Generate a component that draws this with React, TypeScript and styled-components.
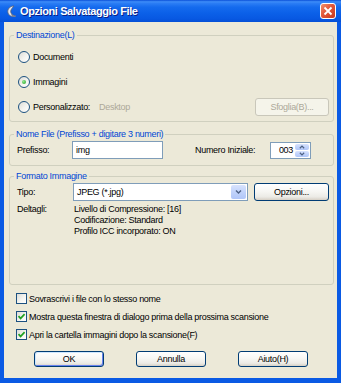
import styled, { createGlobalStyle } from "styled-components";

const GlobalStyle = createGlobalStyle`
  html, body {
    margin: 0;
    padding: 0;
    background: #ffffff;
  }
`;

const Window = styled.div`
  width: 341px;
  height: 383px;
  display: flex;
  flex-direction: column;
  overflow: hidden;
  font-family: "Liberation Sans", Arial, sans-serif;
  font-size: 9px;
  letter-spacing: -0.3px;
  color: #000;
`;

const TitleBar = styled.div`
  height: 22px;
  flex: none;
  display: flex;
  align-items: center;
  gap: 3px;
  padding: 0 5px 0 6px;
  background: linear-gradient(
    to bottom,
    #0a4fd8 0%,
    #3d8cf8 8%,
    #2a7cf4 16%,
    #156bee 32%,
    #0b60e8 60%,
    #0858e2 85%,
    #0550d6 100%
  );
`;

const Title = styled.span`
  color: #fff;
  font-weight: bold;
  font-size: 11px;
  letter-spacing: -0.4px;
  text-shadow: 1px 1px 0 #0a1e86;
`;

const CloseButton = styled.span`
  margin-left: auto;
  width: 16px;
  height: 16px;
  box-sizing: border-box;
  border: 1px solid #fff;
  border-radius: 3px;
  background: linear-gradient(135deg, #f0906c 0%, #e2573a 45%, #c8391d 100%);
  display: flex;
  align-items: center;
  justify-content: center;
`;

const Frame = styled.div`
  flex: 1;
  display: flex;
  flex-direction: column;
  background: #ece9d8;
  border: solid #0a5ae4;
  border-width: 0 4px 5px 4px;
  padding: 8px 3px 0 5px;
`;

const Group = styled.fieldset<{ $pad: string; $top: number }>`
  margin: ${(p) => p.$top}px 0 0 0;
  min-width: 0;
  border: 1px solid #d0d0bf;
  border-radius: 3px;
  padding: ${(p) => p.$pad};
`;

const Legend = styled.legend`
  color: #0046d5;
  padding: 0 2px;
  margin-left: -3px;
  height: 11px;
  line-height: 11px;
`;

const Rows = styled.div<{ $gap: number }>`
  display: flex;
  flex-direction: column;
  gap: ${(p) => p.$gap}px;
`;

const Row = styled.div<{ $h?: number }>`
  display: flex;
  align-items: center;
  height: ${(p) => p.$h ?? 18}px;
`;

const RadioCircle = styled.span<{ $checked?: boolean }>`
  width: 12px;
  height: 12px;
  box-sizing: border-box;
  margin: 0 3px 0 1px;
  border: 1px solid #1c5180;
  border-radius: 50%;
  background: linear-gradient(135deg, #dcdcd7 0%, #f4f4f0 55%, #ffffff 100%);
  display: flex;
  align-items: center;
  justify-content: center;

  &::after {
    content: "";
    width: 4px;
    height: 4px;
    border-radius: 50%;
    background: ${(p) =>
      p.$checked ? "radial-gradient(circle at 35% 35%, #8fe88f, #21a121)" : "transparent"};
  }
`;

const Label = styled.span<{ $w?: number; $muted?: boolean }>`
  white-space: nowrap;
  flex: none;
  width: ${(p) => (p.$w ? `${p.$w}px` : "auto")};
  color: ${(p) => (p.$muted ? "#aca899" : "#000")};
`;

const PushButton = styled.button<{ $w: number; $h?: number; $default?: boolean }>`
  flex: none;
  width: ${(p) => p.$w}px;
  height: ${(p) => p.$h ?? 16}px;
  padding: 0;
  box-sizing: border-box;
  font: inherit;
  letter-spacing: inherit;
  color: #000;
  border: 1px solid #003c74;
  border-radius: 3px;
  background: linear-gradient(to bottom, #ffffff 0%, #f7f7f4 45%, #ecebe6 80%, #d6d0c5 100%);
  box-shadow: ${(p) =>
    p.$default ? "inset 1px 1px 0 #cee7ff, inset -1px -1px 0 #6982ee" : "none"};

  &:disabled {
    border-color: #c9c7ba;
    color: #aca899;
    background: #f5f4ea;
  }
`;

const TextField = styled.div<{ $w: number; $h?: number }>`
  flex: none;
  width: ${(p) => p.$w}px;
  height: ${(p) => p.$h ?? 17}px;
  box-sizing: border-box;
  border: 1px solid #7f9db9;
  background: #fff;
  display: flex;
  align-items: center;
  padding-left: 3px;
`;

const Spinner = styled.div`
  flex: none;
  width: 41px;
  height: 17px;
  box-sizing: border-box;
  border: 1px solid #7f9db9;
  background: #fff;
  display: flex;
`;

const SpinValue = styled.span`
  flex: 1;
  text-align: right;
  line-height: 15px;
  padding-right: 2px;
`;

const SpinStack = styled.div`
  width: 14px;
  display: flex;
  flex-direction: column;
  gap: 1px;
  padding: 1px 1px 1px 0;
`;

const ArrowButton = styled.span<{ $w?: number }>`
  flex: ${(p) => (p.$w ? `0 0 ${p.$w}px` : "1")};
  border-radius: 2px;
  background: linear-gradient(to bottom, #d8e3fd 0%, #c1d3fb 50%, #b0c6f8 100%);
  display: flex;
  align-items: center;
  justify-content: center;
`;

const Combo = styled.div`
  flex: none;
  width: 175px;
  height: 18px;
  box-sizing: border-box;
  border: 1px solid #7f9db9;
  background: #fff;
  display: flex;
  padding: 1px;
`;

const ComboText = styled.span`
  flex: 1;
  line-height: 14px;
  padding-left: 2px;
`;

const Details = styled.div`
  display: flex;
  margin-top: 3px;
  line-height: 11px;
`;

const DetailLines = styled.div`
  display: flex;
  flex-direction: column;
`;

const CheckList = styled.div`
  display: flex;
  flex-direction: column;
  gap: 5px;
  margin-top: 7px;
  padding-left: 7px;
`;

const CheckBox = styled.span`
  flex: none;
  width: 11px;
  height: 11px;
  box-sizing: border-box;
  margin-right: 2px;
  border: 1px solid #1c5180;
  background: linear-gradient(135deg, #dcdcd7 0%, #f4f4f0 55%, #ffffff 100%);
  display: flex;
  align-items: center;
  justify-content: center;
`;

const ButtonRow = styled.div`
  display: flex;
  gap: 32px;
  margin-top: 10px;
  padding-left: 25px;
`;

const AppIcon = () => (
  <svg width="11" height="13" viewBox="0 0 11 13">
    <path d="M8 1 C4 1 1 4 2 8 C3 11 6 12 9 11 C6 10 4 8 5 5 C6 3 7 2 8 1 Z" fill="#e6e8f0" stroke="#5a6070" strokeWidth="0.8" />
    <path d="M5 8 C6 10 8 11 10 10.5 L9.5 12 C7 12.5 5 11 5 8 Z" fill="#7b8396" />
  </svg>
);

const Tick = () => (
  <svg width="9" height="9" viewBox="0 0 9 9">
    <path d="M1.5 4.2 L3.6 6.4 L7.6 2.2" fill="none" stroke="#21a121" strokeWidth="1.7" />
  </svg>
);

const Chevron = ({ up = false, size = 7 }: { up?: boolean; size?: number }) => (
  <svg width={size} height={Math.round(size * 0.6)} viewBox="0 0 7 4">
    <path d={up ? "M1 3.5 L3.5 1 L6 3.5" : "M1 0.5 L3.5 3 L6 0.5"} fill="none" stroke="#4d6185" strokeWidth="1.4" />
  </svg>
);

const Check = ({ checked, children }: { checked?: boolean; children: string }) => (
  <Row $h={13}>
    <CheckBox>{checked && <Tick />}</CheckBox>
    <Label>{children}</Label>
  </Row>
);

const Radio = ({ checked, children }: { checked?: boolean; children: string }) => (
  <>
    <RadioCircle $checked={checked} />
    <Label>{children}</Label>
  </>
);

export default function App() {
  return (
    <>
      <GlobalStyle />
      <Window>
        <TitleBar>
          <AppIcon />
          <Title>Opzioni Salvataggio File</Title>
          <CloseButton>
            <svg width="10" height="10" viewBox="0 0 10 10">
              <path d="M1.5 1.5 L8.5 8.5 M8.5 1.5 L1.5 8.5" stroke="#fff" strokeWidth="1.8" />
            </svg>
          </CloseButton>
        </TitleBar>

        <Frame>
          <Group $top={0} $pad="7px 4px 5px 7px">
            <Legend>Destinazione(L)</Legend>
            <Rows $gap={7}>
              <Row>
                <Radio>Documenti</Radio>
              </Row>
              <Row>
                <Radio checked>Immagini</Radio>
              </Row>
              <Row>
                <Radio>Personalizzato:</Radio>
                <Label $muted style={{ marginLeft: 9 }}>Desktop</Label>
                <PushButton $w={74} $h={18} disabled style={{ marginLeft: "auto" }}>
                  Sfoglia(B)...
                </PushButton>
              </Row>
            </Rows>
          </Group>

          <Group $top={7} $pad="1px 4px 6px 7px">
            <Legend>Nome File (Prefisso + digitare 3 numeri)</Legend>
            <Row>
              <Label $w={55}>Prefisso:</Label>
              <TextField $w={91} $h={18}>img</TextField>
              <Label $w={75} style={{ marginLeft: 32 }}>Numero Iniziale:</Label>
              <Spinner>
                <SpinValue>003</SpinValue>
                <SpinStack>
                  <ArrowButton>
                    <Chevron up size={6} />
                  </ArrowButton>
                  <ArrowButton>
                    <Chevron size={6} />
                  </ArrowButton>
                </SpinStack>
              </Spinner>
            </Row>
          </Group>

          <Group $top={5} $pad="1px 4px 47px 7px">
            <Legend>Formato Immagine</Legend>
            <Row>
              <Label $w={56}>Tipo:</Label>
              <Combo>
                <ComboText>JPEG (*.jpg)</ComboText>
                <ArrowButton $w={15}>
                  <Chevron />
                </ArrowButton>
              </Combo>
              <PushButton $w={75} $h={18} style={{ marginLeft: 6 }}>
                Opzioni...
              </PushButton>
            </Row>
            <Details>
              <Label $w={57}>Deltagli:</Label>
              <DetailLines>
                <span>Livello di Compressione: [16]</span>
                <span>Codificazione: Standard</span>
                <span>Profilo ICC incorporato: ON</span>
              </DetailLines>
            </Details>
          </Group>

          <CheckList>
            <Check>Sovrascrivi i file con lo stesso nome</Check>
            <Check checked>Mostra questa finestra di dialogo prima della prossima scansione</Check>
            <Check checked>Apri la cartella immagini dopo la scansione(F)</Check>
          </CheckList>

          <ButtonRow>
            <PushButton $w={70} $default>OK</PushButton>
            <PushButton $w={70}>Annulla</PushButton>
            <PushButton $w={70}>Aiuto(H)</PushButton>
          </ButtonRow>
        </Frame>
      </Window>
    </>
  );
}
